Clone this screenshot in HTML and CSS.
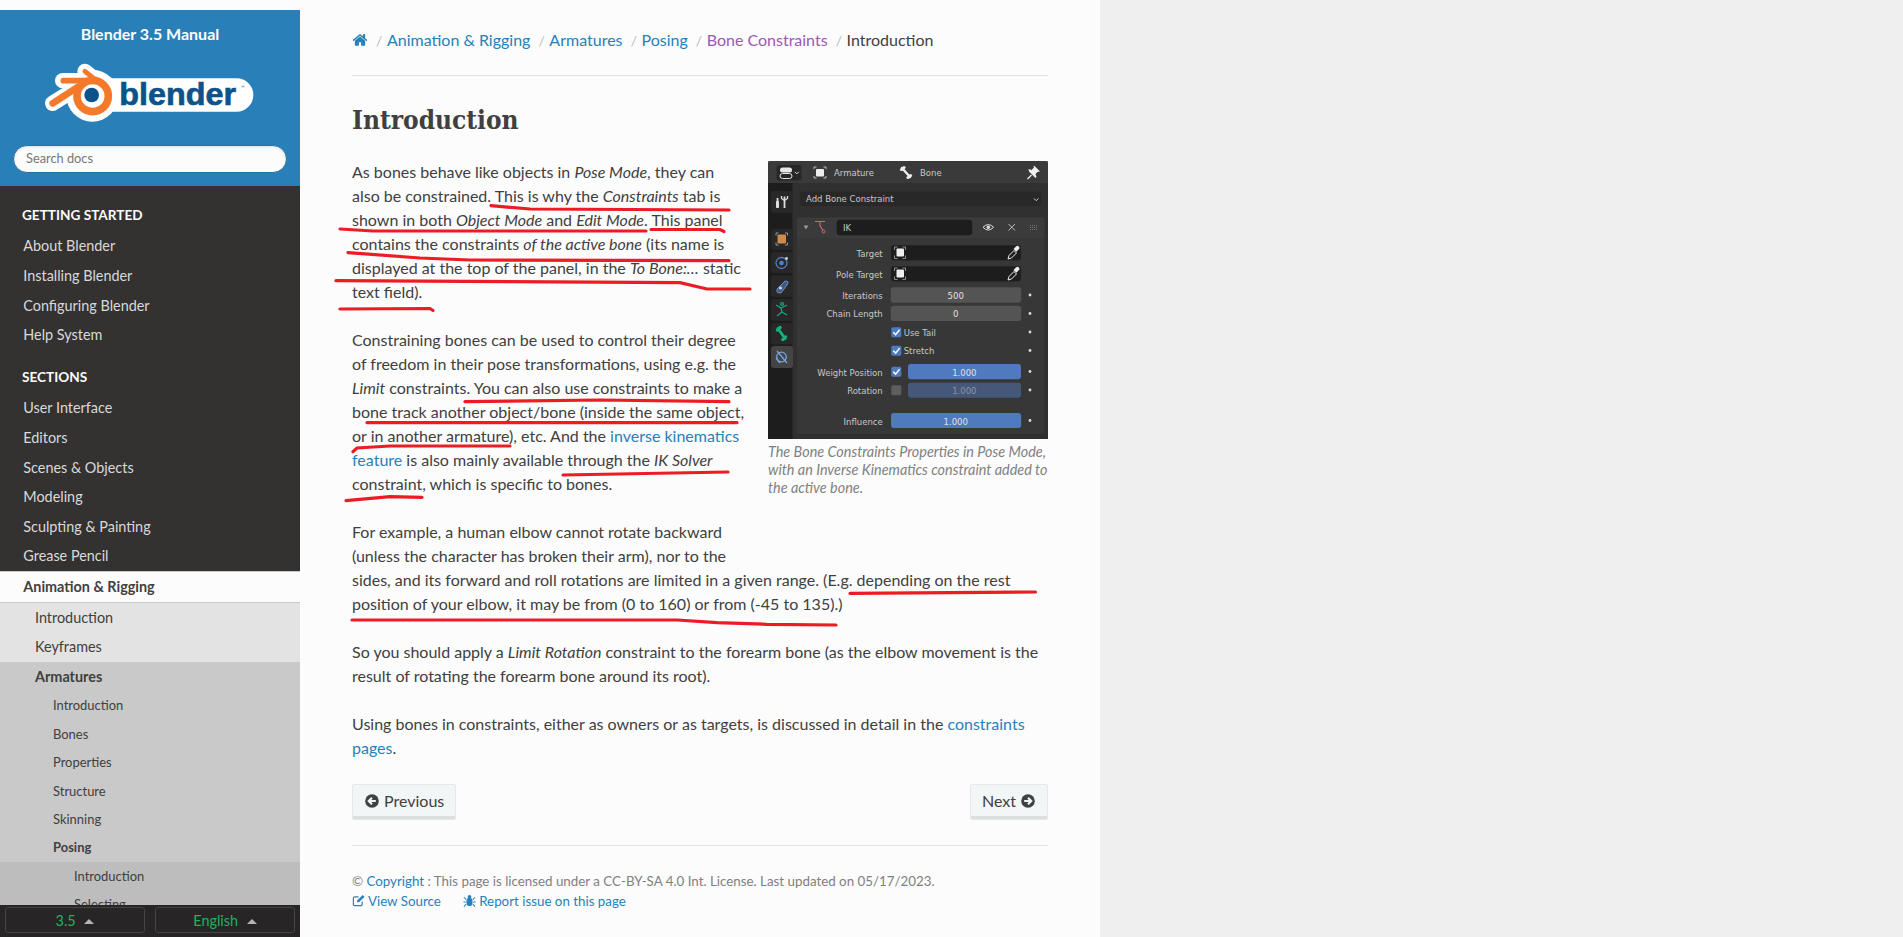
FILE: index.html
```html
<!DOCTYPE html>
<html lang="en">
<head>
  <meta charset="UTF-8" />
  <meta name="viewport" content="width=device-width, initial-scale=1.0" />
  <title>Introduction - Blender 3.5 Manual</title>
  <link rel="stylesheet" href="styles.css">
</head>
<body>
  <div class="page">

    <aside class="sidebar">
      <div class="side-head">
        <a class="side-title" href="#">Blender 3.5 Manual</a>
        <svg class="logo" viewBox="0 0 720 270" width="240" height="90" aria-label="Blender logo">
          <g fill="none" stroke="#fff" stroke-linecap="round">
            <path d="M98 92H170" stroke-width="46"/>
            <path d="M165 64L215 105" stroke-width="46"/>
            <path d="M68 160L145 112" stroke-width="46"/>
          </g>
          <rect x="170" y="85" width="500" height="100" rx="50" fill="#fff"/>
          <circle cx="187" cy="137" r="78" fill="#fff"/>
          <g fill="none" stroke="#f5792a" stroke-linecap="round">
            <path d="M100 92H170" stroke-width="17"/>
            <path d="M165 64L210 100" stroke-width="15"/>
            <path d="M68 160L145 110" stroke-width="20"/>
          </g>
          <circle cx="188" cy="138" r="47" fill="none" stroke="#f5792a" stroke-width="23"/>
          <circle cx="185" cy="135" r="22" fill="#0d528a"/>
          <text class="logo-word" x="268" y="165" textLength="350" lengthAdjust="spacingAndGlyphs">blender</text>
          <rect x="634" y="107" width="10" height="5" fill="#9dbdd6"/>
        </svg>
        <input class="search" type="text" placeholder="Search docs">
      </div>

      <nav class="side-nav">
        <p class="caption first">Getting Started</p>
        <ul>
          <li><a href="#">About Blender</a></li>
          <li><a href="#">Installing Blender</a></li>
          <li><a href="#">Configuring Blender</a></li>
          <li><a href="#">Help System</a></li>
        </ul>
        <p class="caption">Sections</p>
        <ul>
          <li><a href="#">User Interface</a></li>
          <li><a href="#">Editors</a></li>
          <li><a href="#">Scenes &amp; Objects</a></li>
          <li><a href="#">Modeling</a></li>
          <li><a href="#">Sculpting &amp; Painting</a></li>
          <li><a href="#">Grease Pencil</a></li>
          <li class="current"><a href="#">Animation &amp; Rigging</a>
            <ul class="level2">
              <li><a href="#">Introduction</a></li>
              <li><a href="#">Keyframes</a></li>
              <li class="open"><a href="#">Armatures</a>
                <ul class="level3">
                  <li><a href="#">Introduction</a></li>
                  <li><a href="#">Bones</a></li>
                  <li><a href="#">Properties</a></li>
                  <li><a href="#">Structure</a></li>
                  <li><a href="#">Skinning</a></li>
                  <li class="open"><a href="#">Posing</a>
                    <ul class="level4">
                      <li><a href="#">Introduction</a></li>
                      <li><a href="#">Selecting</a></li>
                    </ul>
                  </li>
                </ul>
              </li>
            </ul>
          </li>
        </ul>
      </nav>

      <div class="version-bar">
        <button class="version-btn">3.5 <span class="caret"></span></button>
        <button class="version-btn">English <span class="caret"></span></button>
      </div>
    </aside>

    <main class="content">
      <div class="breadcrumbs">
        <a href="#" class="crumb-home" aria-label="Home">
          <svg viewBox="0 0 1792 1792" width="16" height="16"><path fill="currentColor" d="M1472 992v480q0 26-19 45t-45 19h-384v-384H768v384H384q-26 0-45-19t-19-45V992q0-1 .5-3t.5-3l575-474 575 474q1 2 1 6zm223-69l-62 74q-8 9-21 11h-3q-13 0-21-7L896 424l-692 577q-12 8-24 7-13-2-21-11l-62-74q-8-10-7-23.500t11-21.500l719-599q32-26 76-26t76 26l244 204V288q0-14 9-23t23-9h192q14 0 23 9t9 23v408l219 182q10 8 11 21.500t-7 23.500z"/></svg>
        </a>
        <span class="sep">/</span><a href="#">Animation &amp; Rigging</a>
        <span class="sep">/</span><a href="#">Armatures</a>
        <span class="sep">/</span><a href="#">Posing</a>
        <span class="sep">/</span><a href="#" class="visited">Bone Constraints</a>
        <span class="sep">/</span><span>Introduction</span>
      </div>
      <hr>

      <h1>Introduction</h1>

      <figure class="shot">
        <svg class="shot-img" viewBox="0 0 280 278" width="280" height="278">
          <path d="M3 0H277Q280 0 280 3V278H0V3Q0 0 3 0Z" fill="#303030"/>
          <rect y="0" width="280" height="22" fill="#3d3d3d" opacity=".75"/>
          <rect y="22" width="24.500" height="256" fill="#1d1d1d"/>

          <!-- header -->
          <rect x="8.500" y="4" width="25" height="15.500" rx="3" fill="#282828"/>
          <rect x="12" y="6.500" width="12" height="5" rx="2.500" fill="#e6e6e6"/>
          <rect x="12" y="12.500" width="12" height="5" rx="2.500" fill="none" stroke="#e6e6e6"/>
          <path d="M26.800 10.800l2 2 2-2" fill="none" stroke="#ddd"/>
          <path d="M46 8V6h2.500M55.500 6H58v2M58 15v2h-2.500M48.500 17H46v-2" fill="none" stroke="#ccc" stroke-width=".9"/>
          <rect x="48" y="8" width="8" height="7.500" rx="1" fill="#eee"/>
          <text class="ui" x="66" y="15.300">Armature</text>
          <path d="M134 7l8 9" stroke="#eee" stroke-width="2.400" stroke-linecap="round"/>
          <circle cx="133.500" cy="8.500" r="1.600" fill="#eee"/><circle cx="136" cy="6.500" r="1.600" fill="#eee"/>
          <circle cx="142.500" cy="14.500" r="1.600" fill="#eee"/><circle cx="140" cy="16.500" r="1.600" fill="#eee"/>
          <text class="ui" x="152" y="15.300">Bone</text>
          <path d="M259.500 18l4-4" stroke="#f0f0f0" stroke-width="1.300"/>
          <path d="M261 10.500l6.500 6.500 1-1-1-3 2.500-2.500 1 .5 .8-.8-5.500-5.500-.8.8 .5 1-2.500 2.500-3-1z" fill="#f0f0f0"/>

          <!-- tabs -->
          <rect x="3" y="30" width="22" height="22" rx="3" fill="#282828"/>
          <path d="M9.500 37v10M16.500 35.500v3.500M16.500 39v8" stroke="#ddd" stroke-width="1.800"/>
          <path d="M13.500 35v2.500l3 2 3-2V35" fill="none" stroke="#ddd" stroke-width="1.300"/>
          <rect x="8" y="40" width="3" height="7" rx="1" fill="#ddd"/>
          <rect x="3" y="68" width="22" height="21" rx="3" fill="#282828"/>
          <path d="M8 74.500v-2.500h2.500M17 72h2.500v2.500M19.500 81.500v2.500H17M10.500 84H8v-2.500" fill="none" stroke="#999"/>
          <rect x="9.500" y="73.500" width="8.500" height="9" rx="1" fill="#cf8a4e"/>
          <rect x="3" y="91" width="22" height="21" rx="3" fill="#282828"/>
          <circle cx="13.500" cy="102" r="5.500" fill="none" stroke="#5680c2" stroke-width="1.300"/>
          <circle cx="13.500" cy="102" r="2.300" fill="#5680c2"/>
          <circle cx="18.500" cy="97.500" r="1.400" fill="#c8d6ee"/>
          <rect x="3" y="114.500" width="22" height="21.500" rx="3" fill="#282828"/>
          <path d="M9 128l8-8q2 0 3 1 0 2-1 3l-6 8q-3 0-4-1z" fill="#3f5a87" stroke="#7ca0d8" stroke-width=".8"/>
          <circle cx="12.500" cy="127" r="1.500" fill="#cfdcf0"/>
          <rect x="3" y="138" width="22" height="22" rx="3" fill="#282828"/>
          <g fill="none" stroke="#1aa883" stroke-width="1.200">
            <circle cx="14" cy="143" r="1.400"/>
            <path d="M8 144l5 3 6-3M13 147l1 4-5 4M14 151l5 3"/>
          </g>
          <rect x="3" y="162" width="22" height="21.500" rx="3" fill="#282828"/>
          <path d="M10 167.500l7 10" stroke="#12b37e" stroke-width="2.800" stroke-linecap="round"/>
          <circle cx="9.500" cy="169" r="1.800" fill="#12b37e"/><circle cx="12" cy="166.500" r="1.800" fill="#12b37e"/>
          <circle cx="17.500" cy="176" r="1.800" fill="#12b37e"/><circle cx="15" cy="178.500" r="1.800" fill="#12b37e"/>
          <rect x="3" y="185" width="22" height="22" rx="3" fill="#444"/>
          <g fill="none" stroke="#7ba3dc" stroke-width="1.300">
            <circle cx="13.500" cy="196" r="4.800"/>
            <path d="M9 190l10 12M8 197l4 5"/>
          </g>

          <!-- add constraint -->
          <rect x="32" y="30.500" width="241" height="14.500" rx="3" fill="#282828"/>
          <text class="ui" x="38" y="41.300">Add Bone Constraint</text>
          <path d="M266 37.500l2.200 2.200 2.200-2.200" fill="none" stroke="#ccc"/>

          <!-- constraint panel -->
          <rect x="29" y="56.500" width="247.500" height="216.500" rx="3" fill="#373737"/>
          <path d="M29 77.500V59.500q0-3 3-3H273.500q3 0 3 3V77.500z" fill="#3b3b3b"/>
          <path d="M35.500 64.500h5l-2.500 4z" fill="#999"/>
          <path d="M47 60.500h10M52 60.500v4l3 5" fill="none" stroke="#c96a6a" stroke-width="1.100"/>
          <circle cx="55.500" cy="70.500" r="1.500" fill="none" stroke="#c96a6a"/>
          <rect x="68.700" y="58.700" width="135.500" height="15.500" rx="3" fill="#1d1d1d"/>
          <text class="ui" x="75" y="70">IK</text>
          <path d="M215 66.300q5.300-5.500 10.600 0-5.300 5.500-10.600 0z" fill="none" stroke="#ddd"/>
          <circle cx="220.300" cy="66.300" r="1.800" fill="#ddd"/>
          <path d="M240.500 63l6.500 6.500M247 63l-6.500 6.500" stroke="#bbb"/>
          <path d="M262 64.500h8M262 66.500h8M262 68.500h8" stroke="#777" stroke-dasharray="1 1"/>

          <!-- target rows -->
          <text class="ui end" x="114.700" y="95.500">Target</text>
          <rect class="field-dark" x="122.700" y="84" width="130.500" height="15.700" rx="3"/>
          <path d="M126.500 89v-3h3M134.500 86h3v3M137.500 94.500v3h-3M129.500 97.500h-3v-3" fill="none" stroke="#aaa" stroke-width=".8"/>
          <rect x="128.500" y="87.500" width="7.500" height="8" rx="1" fill="#eee"/>
          <path d="M240 98l1-3.500 5-5 2.500 2.500-5 5z" fill="none" stroke="#eee"/>
          <path d="M245.500 88l2.500-2.500a1.800 1.800 0 0 1 2.800 2.800l-2.500 2.500z" fill="#eee"/>
          <text class="ui end" x="114.700" y="116.500">Pole Target</text>
          <rect class="field-dark" x="122.700" y="105" width="130.500" height="15.700" rx="3"/>
          <path d="M126.500 110v-3h3M134.500 107h3v3M137.500 115.500v3h-3M129.500 118.500h-3v-3" fill="none" stroke="#aaa" stroke-width=".8"/>
          <rect x="128.500" y="108.500" width="7.500" height="8" rx="1" fill="#eee"/>
          <path d="M240 119l1-3.500 5-5 2.500 2.500-5 5z" fill="none" stroke="#eee"/>
          <path d="M245.500 109l2.500-2.500a1.800 1.800 0 0 1 2.800 2.800l-2.500 2.500z" fill="#eee"/>

          <!-- number rows -->
          <text class="ui end" x="114.700" y="137.500">Iterations</text>
          <rect class="field-num" x="122.700" y="126.300" width="130.500" height="15.400" rx="3"/>
          <text class="ui mid" x="187.700" y="137.500">500</text>
          <text class="ui end" x="114.700" y="156">Chain Length</text>
          <rect class="field-num" x="122.700" y="144.700" width="130.500" height="15.400" rx="3"/>
          <text class="ui mid" x="187.700" y="156">0</text>

          <rect class="check" x="123.300" y="166.300" width="10" height="10" rx="1.500"/>
          <path class="tick" d="M125.300 171.300l2.300 2.400 4-5"/>
          <text class="ui" x="135.700" y="174.700">Use Tail</text>
          <rect class="check" x="123.300" y="184.700" width="10" height="10" rx="1.500"/>
          <path class="tick" d="M125.300 189.700l2.300 2.400 4-5"/>
          <text class="ui" x="135.700" y="193">Stretch</text>

          <text class="ui end" x="114.700" y="214.500">Weight Position</text>
          <rect class="check" x="123.300" y="205.700" width="10" height="10" rx="1.500"/>
          <path class="tick" d="M125.300 210.700l2.300 2.400 4-5"/>
          <rect class="field-blue" x="140" y="203" width="113" height="15.300" rx="3"/>
          <text class="ui mid" x="196.300" y="214.500">1.000</text>

          <text class="ui end" x="114.700" y="233">Rotation</text>
          <rect x="123.300" y="224.300" width="10" height="10" rx="1.500" fill="#5e5e5e"/>
          <rect x="140" y="221.700" width="113" height="15" rx="3" fill="#45587a"/>
          <text class="ui mid dim" x="196.300" y="233">1.000</text>

          <text class="ui end" x="114.700" y="263.500">Influence</text>
          <rect class="field-blue" x="123" y="252" width="130.200" height="15" rx="3"/>
          <text class="ui mid" x="187.700" y="263.500">1.000</text>

          <g fill="#ddd">
            <circle cx="262" cy="134" r="1.400"/><circle cx="262" cy="152.500" r="1.400"/>
            <circle cx="262" cy="171" r="1.400"/><circle cx="262" cy="189.500" r="1.400"/>
            <circle cx="262" cy="210.500" r="1.400"/><circle cx="262" cy="229" r="1.400"/>
            <circle cx="262" cy="259.500" r="1.400"/>
          </g>
        </svg>
        <figcaption>The Bone Constraints Properties in Pose Mode, with an Inverse Kinematics constraint added to the active bone.</figcaption>
      </figure>

      <p>As bones behave like objects in <em>Pose Mode</em>, they can also be constrained. This is why the <em>Constraints</em> tab is shown in both <em>Object Mode</em> and <em>Edit Mode</em>. This panel contains the constraints <em>of the active bone</em> (its name is displayed at the top of the panel, in the <em>To Bone:…</em> static text field).</p>

      <p>Constraining bones can be used to control their degree of freedom in their pose transformations, using e.g. the <em>Limit</em> constraints. You can also use constraints to make a bone track another object/bone (inside the same object, or in another armature), etc. And the <a href="#">inverse kinematics feature</a> is also mainly available through the <em>IK Solver</em> constraint, which is specific to bones.</p>

      <p>For example, a human elbow cannot rotate backward (unless the character has broken their arm), nor to the sides, and its forward and roll rotations are limited in a given range. (E.g. depending on the rest position of your elbow, it may be from (0 to 160) or from (-45 to 135).)</p>

      <p>So you should apply a <em>Limit Rotation</em> constraint to the forearm bone (as the elbow movement is the result of rotating the forearm bone around its root).</p>

      <p>Using bones in constraints, either as owners or as targets, is discussed in detail in the <a href="#">constraints pages</a>.</p>

      <div class="pager">
        <a href="#" class="btn">
          <svg viewBox="0 0 16 16" width="16" height="16"><circle cx="8" cy="8" r="6.800" fill="#404040"/><path d="M11.800 8H5M8 4.800L4.800 8 8 11.200" fill="none" stroke="#f3f6f6" stroke-width="2.200"/></svg>
          Previous
        </a>
        <a href="#" class="btn">
          Next
          <svg viewBox="0 0 16 16" width="16" height="16"><circle cx="8" cy="8" r="6.800" fill="#404040"/><path d="M4.200 8H11M8 4.800L11.200 8 8 11.200" fill="none" stroke="#f3f6f6" stroke-width="2.200"/></svg>
        </a>
      </div>
      <hr class="foot-rule">

      <footer class="foot">
        <div>© <a href="#">Copyright</a> : This page is licensed under a CC-BY-SA 4.0 Int. License. Last updated on 05/17/2023.</div>
        <div class="foot-links">
          <a href="#">
            <svg viewBox="0 0 14 14" width="13" height="13"><path d="M11 8v3a1.500 1.500 0 0 1-1.500 1.500H3A1.500 1.500 0 0 1 1.500 11V4.500A1.500 1.500 0 0 1 3 3h4" fill="none" stroke="currentColor" stroke-width="1.300"/><path d="M5.500 7l6-6 2 2-6 6H5.500z" fill="currentColor"/></svg>
            View Source</a>
          <a href="#">
            <svg viewBox="0 0 14 14" width="13" height="13"><ellipse cx="7" cy="8.500" rx="3.300" ry="4.500" fill="currentColor"/><circle cx="7" cy="3.200" r="2" fill="currentColor"/><path d="M3.500 6L1 3.500M10.500 6L13 3.500M3 8.500H.5M11 8.500h2.500M3.500 11L1 13.500M10.500 11l2.500 2.500" stroke="currentColor" stroke-width="1.100"/></svg>
            Report issue on this page</a>
        </div>
      </footer>

      <!-- marker strokes someone drew over the text -->
      <svg class="marker" viewBox="300 0 800 937" width="800" height="937" aria-hidden="true">
        <path d="M491 205.700L530 209L729 210"/>
        <path d="M340 229L373 231L646 231"/>
        <path d="M651 229.500L720 229.500L724 231.500"/>
        <path d="M348 252.700L420 258L470 260L729 260.700"/>
        <path d="M336 280.700L680 282.700L707 289L750 289"/>
        <path d="M340 309L430 308.500L433 310.500"/>
        <path d="M465 401.700L600 400L729 401.700"/>
        <path d="M367 422.700L737 422.700"/>
        <path d="M353 451.700L357 448L390 446L510 446"/>
        <path d="M563 475L728 472"/>
        <path d="M346 500.700L390 496.700L422 497.300"/>
        <path d="M850 593.300L1035.500 592"/>
        <path d="M352 620L677 620L717 622.700L766.500 624.300L836 625"/>
      </svg>
    </main>

  </div>
</body>
</html>
```

FILE: styles.css
```css
html, body {
  margin: 0;
  padding: 0;
  height: 100%;
  overflow: hidden;
  background: #efefef;
  font-family: Lato, "Noto Sans", sans-serif;
  font-size: 16px;
  color: #404040;
}

a {
  color: #2980b9;
  text-decoration: none;
}

.page {
  display: flex;
  height: 937px;
}

/* sidebar */

.sidebar {
  width: 300px;
  height: 927px;
  margin-top: 10px;
  flex: none;
  display: flex;
  flex-direction: column;
  background: #343131;
  box-shadow: 0 -10px 0 #fcfcfc;
}

.side-head {
  height: 176px;
  flex: none;
  box-sizing: border-box;
  background: #2980b9;
  text-align: center;
  padding-top: 15px;
}

.side-title {
  display: block;
  color: #fcfcfc;
  font-weight: 700;
  line-height: 18px;
}

.logo {
  display: block;
  margin: 7px 0 0 30px;
}

.logo-word {
  font-family: "Liberation Sans", sans-serif;
  font-weight: 700;
  font-size: 96px;
  fill: #0d528a;
  stroke: #0d528a;
  stroke-width: 2;
}

.search {
  display: block;
  box-sizing: border-box;
  width: 274px;
  height: 28px;
  margin: 5px 13px 0;
  padding: 0 12px 2px;
  border: 1px solid #2472a4;
  border-radius: 50px;
  background: #fcfcfc;
  box-shadow: inset 0 1px 3px #ddd;
  font-family: inherit;
  font-size: 12.800px;
  color: #404040;
}

.search::placeholder {
  color: #777;
}

.side-nav {
  flex: 1;
  min-height: 0;
  overflow: hidden;
  font-size: 14.400px;
  line-height: 18px;
}

.side-nav ul {
  list-style: none;
  margin: 0;
  padding: 0;
}

.caption {
  margin: 17.500px 0 8px;
  padding-left: 22px;
  color: #fcfcfc;
  font-size: 13.600px;
  font-weight: 700;
  text-transform: uppercase;
}

.caption.first {
  margin-top: 19.500px;
}

.side-nav a {
  display: block;
  padding: 5.820px 23.300px;
  color: #d9d9d9;
}

.current > a {
  background: #fcfcfc;
  border-top: 1px solid #c9c9c9;
  border-bottom: 1px solid #c9c9c9;
  padding: 5.800px 23.300px;
  font-weight: 700;
  color: #404040 !important;
}

.level2 > li > a {
  background: #e3e3e3;
  color: #404040;
  padding-left: 35px;
}

.level2 > li.open > a {
  background: #c9c9c9;
  font-weight: 700;
  padding-bottom: 5px;
}

.level3 > li > a {
  background: #c9c9c9;
  color: #404040;
  font-size: 12.960px;
  padding: 5.240px 23px 5.240px 53px;
}

.level3 > li.open > a {
  font-weight: 700;
}

.level4 > li > a {
  background: #bdbdbd;
  color: #404040;
  font-size: 12.960px;
  padding: 5.240px 23px 5.240px 74px;
}

.version-bar {
  height: 32px;
  flex: none;
  display: flex;
  gap: 10px;
  box-sizing: border-box;
  padding: 2px 5px 0;
  background: #272525;
}

.version-btn {
  flex: 1;
  height: 26px;
  border: 1px solid #454343;
  border-radius: 3px;
  background: #272525;
  color: #27ae60;
  font-family: inherit;
  font-size: 14.400px;
}

.caret {
  display: inline-block;
  margin-left: 5px;
  vertical-align: 2px;
  border: 5px solid transparent;
  border-top: 0;
  border-bottom-color: #b5b5b5;
}

/* main column */

.content {
  position: relative;
  width: 800px;
  flex: none;
  box-sizing: border-box;
  padding: 28px 52px 0;
  background: #fcfcfc;
  line-height: 24px;
}

.breadcrumbs a.visited {
  color: #9b59b6;
}

.crumb-home svg {
  vertical-align: -2px;
}

.sep {
  margin: 0 4.500px 0 4px;
  color: #bbb;
  font-size: 14px;
}

hr {
  height: 1px;
  margin: 22px 0 0;
  border: 0;
  background: #e1e4e5;
}

h1 {
  margin: 27px 0 23px;
  font-family: "DejaVu Serif Condensed", "DejaVu Serif", serif;
  font-stretch: condensed;
  font-size: 26px;
  line-height: 34px;
  font-weight: 700;
  color: #404040;
}

p {
  margin: 0 0 24px;
}

.shot {
  float: right;
  width: 280px;
  margin: 1px 0 48px 23px;
}

.shot-img {
  display: block;
}

.ui {
  font-family: "DejaVu Sans", sans-serif;
  font-size: 8.500px;
  fill: #c8c8c8;
}

.end {
  text-anchor: end;
}

.mid {
  text-anchor: middle;
  fill: #e0e0e0;
}

.dim {
  fill: #8b93a3;
}

.field-dark {
  fill: #1d1d1d;
  stroke: #3f3f3f;
  stroke-width: .5;
}

.field-num {
  fill: #545454;
}

.field-blue,
.check {
  fill: #4f7abd;
}

.tick {
  fill: none;
  stroke: #fff;
  stroke-width: 1.500;
}

figcaption {
  margin-top: 4px;
  font-size: 14.400px;
  line-height: 18px;
  font-style: italic;
  color: #808080;
}

.pager {
  display: flex;
  justify-content: space-between;
  clear: both;
}

.btn {
  display: flex;
  align-items: center;
  gap: 4px;
  box-sizing: border-box;
  height: 36px;
  padding: 0 11px 3px;
  background: #f3f6f6;
  border: 1px solid #e6e9e9;
  box-shadow: inset 0 -3px 0 #dcdfdf;
  color: #404040;
  border-radius: 2px;
}

.foot-rule {
  margin-top: 25px;
}

.foot {
  margin-top: 25px;
  font-size: 13.330px;
  line-height: 20px;
  color: #808080;
}

.foot-links {
  display: flex;
  gap: 22px;
}

.foot-links svg {
  vertical-align: -1px;
}

.marker {
  position: absolute;
  top: 0;
  left: 0;
  pointer-events: none;
}

.marker path {
  fill: none;
  stroke: #ed1c24;
  stroke-width: 3.200;
  stroke-linecap: round;
}
```
